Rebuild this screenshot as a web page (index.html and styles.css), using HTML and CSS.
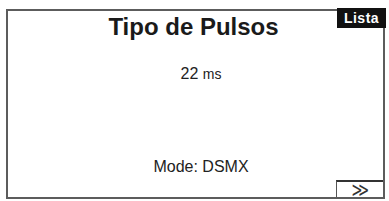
FILE: index.html
```html
<!doctype html>
<html>
<head>
  <title>Tipo de Pulsos</title>
  <link rel="stylesheet" href="styles.css">
</head>
<body>
  <div class='screen'>
    <div class='title'>Tipo de Pulsos</div>
    <div class='value'>22 <span class='unit'>ms</span></div>
    <div class='mode'>Mode: DSMX</div>
    <div class='bottom'>
      <div class='next'><span class='arrows'>&gt;&gt;</span></div>
    </div>
    <div class='lista'>Lista</div>
  </div>
</body>
</html>
```
FILE: styles.css
```css
body {
  margin: 0;
  background: #fff;
  font-family: "Liberation Sans", Arial, sans-serif;
  color: #222;
}

.screen {
  position: relative;
  box-sizing: border-box;
  margin: 9px 0 0 6px;
  width: 379px;
  height: 190px;
  border: 2px solid #5c5c5c;
  display: flex;
  flex-direction: column;
  align-items: center;
}

.title {
  margin-top: 4px;
  padding-right: 4px;
  font-size: 24px;
  line-height: 24px;
  font-weight: bold;
  color: #1a1a1a;
}

.value {
  margin-top: 27px;
  padding-left: 11px;
  font-size: 16px;
  line-height: 16px;
}

.unit {
  font-size: 14px;
}

.mode {
  margin-top: 77px;
  padding-left: 11px;
  font-size: 16px;
  line-height: 16px;
}

.bottom {
  margin-top: auto;
  align-self: stretch;
  display: flex;
  justify-content: flex-end;
}

.next {
  box-sizing: border-box;
  width: 47px;
  height: 17px;
  border-top: 2px solid #333;
  border-left: 1px solid #555;
  display: flex;
  justify-content: center;
  align-items: center;
  padding-right: 4px;
  color: #333;
}

.arrows {
  display: inline-block;
  font-family: "DejaVu Sans", sans-serif;
  font-size: 18px;
  line-height: 15px;
  letter-spacing: -6px;
  transform: scale(0.75, 1.15);
}

.lista {
  position: absolute;
  top: -3px;
  right: -3px;
  width: 49px;
  height: 20px;
  background: #111;
  color: #fff;
  font-size: 14px;
  font-weight: bold;
  line-height: 20px;
  text-align: center;
  letter-spacing: 0.5px;
}
```
